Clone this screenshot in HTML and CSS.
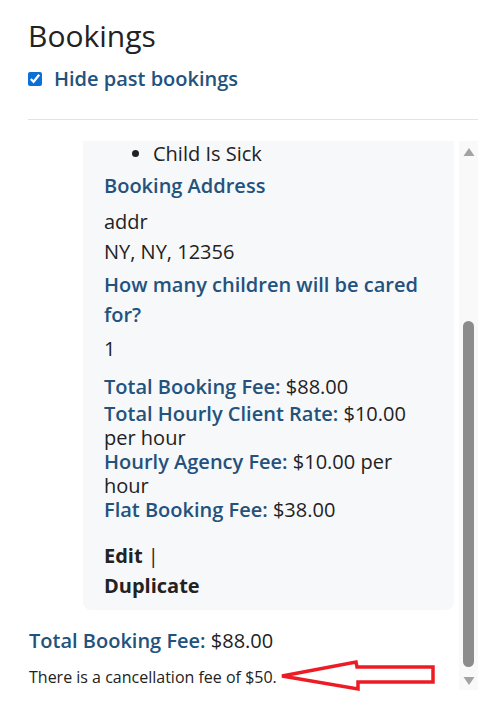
FILE: index.html
```html
<!DOCTYPE html>
<html lang="en">
<head>
<meta charset="utf-8">
<title>Bookings</title>
<link rel="stylesheet" href="styles.css">
</head>
<body>
<div class="page">
  <h2 class="title">Bookings</h2>
  <label class="hide-past"><input type="checkbox" class="check" checked> Hide past bookings</label>
  <hr class="rule">
  <div class="scroller">
    <div class="scroll-content">
      <div class="card">
        <ul class="reasons">
          <li>Child Is Sick</li>
        </ul>
        <div class="label-head first">Booking Address</div>
        <div class="value">addr<br>NY, NY, 12356</div>
        <div class="label-head">How many children will be cared for?</div>
        <div class="value one">1</div>
        <div class="fees">
          <div class="fee-total"><span class="lbl">Total Booking Fee:</span> $88.00</div>
          <div class="fee-rest">
            <div><span class="lbl">Total Hourly Client Rate:</span> $10.00 per hour</div>
            <div><span class="lbl">Hourly Agency Fee:</span> $10.00 per hour</div>
            <div><span class="lbl">Flat Booking Fee:</span> $38.00</div>
          </div>
        </div>
        <div class="actions">
          <div><a class="action">Edit</a> |</div>
          <div><a class="action">Duplicate</a></div>
        </div>
      </div>
      <div class="grand-total"><span class="lbl">Total Booking Fee:</span> $88.00</div>
      <div class="cancel-note">There is a cancellation fee of $50.</div>
    </div>
    <div class="scrollbar">
      <svg class="sb-arrow up" width="12" height="10" viewBox="0 0 12 10"><polygon points="6,1 11.5,9 0.5,9" fill="#a3a3a3"/></svg>
      <div class="sb-thumb"></div>
      <svg class="sb-arrow down" width="12" height="10" viewBox="0 0 12 10"><polygon points="0.5,1 11.5,1 6,9" fill="#a3a3a3"/></svg>
    </div>
  </div>
  <svg class="annot-arrow" width="160" height="38" viewBox="0 0 160 38">
    <polygon points="4,20 78,6 79,11 155,11 155,26 80,26 80,33" fill="none" stroke="#ed1c24" stroke-width="3.5" stroke-linejoin="miter"/>
  </svg>
</div>
</body>
</html>
```
FILE: styles.css
```css
html, body {
  margin: 0;
  padding: 0;
  background: #ffffff;
}
body {
  font-family: "Open Sans", "Noto Sans", sans-serif;
  color: #222222;
  width: 501px;
  height: 706px;
  overflow: hidden;
}
.page {
  position: relative;
  padding: 15px 23px 0 28px;
}
.title {
  margin: 0;
  font-size: 30px;
  line-height: 41px;
  font-weight: 400;
  color: #222222;
}
.hide-past {
  display: flex;
  align-items: center;
  margin-top: 8px;
  font-size: 20px;
  line-height: 30px;
  font-weight: 600;
  color: #23527c;
}
.check {
  width: 14px;
  height: 14px;
  margin: 0 12px 0 0;
  accent-color: #0b6fd6;
}
.rule {
  margin: 25px 0 0 0;
  border: 0;
  border-top: 1px solid #e3e3e3;
  height: 0;
}
.scroller {
  margin-top: 21px;
  height: 549px;
  display: flex;
}
.scroll-content {
  flex: 1;
  overflow: hidden;
  padding-left: 1px;
}
.card {
  margin: 0 5px 0 54px;
  background: #f7f8fa;
  border-radius: 0 0 8px 8px;
  padding: 0 21px 9px 21px;
  font-size: 20px;
  line-height: 30px;
}
.reasons {
  margin: -2px 0 0 0;
  padding-left: 49px;
}
.label-head {
  color: #23527c;
  font-weight: 600;
  margin-top: 3px;
}
.label-head.first {
  margin-top: 2px;
}
.value {
  margin-top: 6px;
}
.value.one {
  margin-top: 4px;
}
.fees {
  margin-top: 11px;
  line-height: 24px;
}
.fee-total {
  margin-bottom: 3px;
}
.lbl {
  color: #23527c;
  font-weight: 600;
}
.actions {
  margin-top: 19px;
}
.action {
  font-weight: 700;
  color: #222222;
}
.grand-total {
  margin-top: 16px;
  font-size: 20px;
  line-height: 30px;
}
.cancel-note {
  margin-top: 9px;
  font-size: 16px;
  line-height: 24px;
}
.scrollbar {
  width: 19px;
  background: #f9f9f9;
  display: flex;
  flex-direction: column;
  align-items: center;
  padding-top: 6px;
  box-sizing: border-box;
}
.sb-arrow {
  display: block;
  flex: none;
}
.sb-thumb {
  margin-top: 164px;
  width: 11px;
  height: 346px;
  background: #8c8c8c;
  border-radius: 6px;
  flex: none;
}
.sb-arrow.down {
  margin-top: 9px;
}
.annot-arrow {
  position: absolute;
  left: 278px;
  top: 656px;
}
```
